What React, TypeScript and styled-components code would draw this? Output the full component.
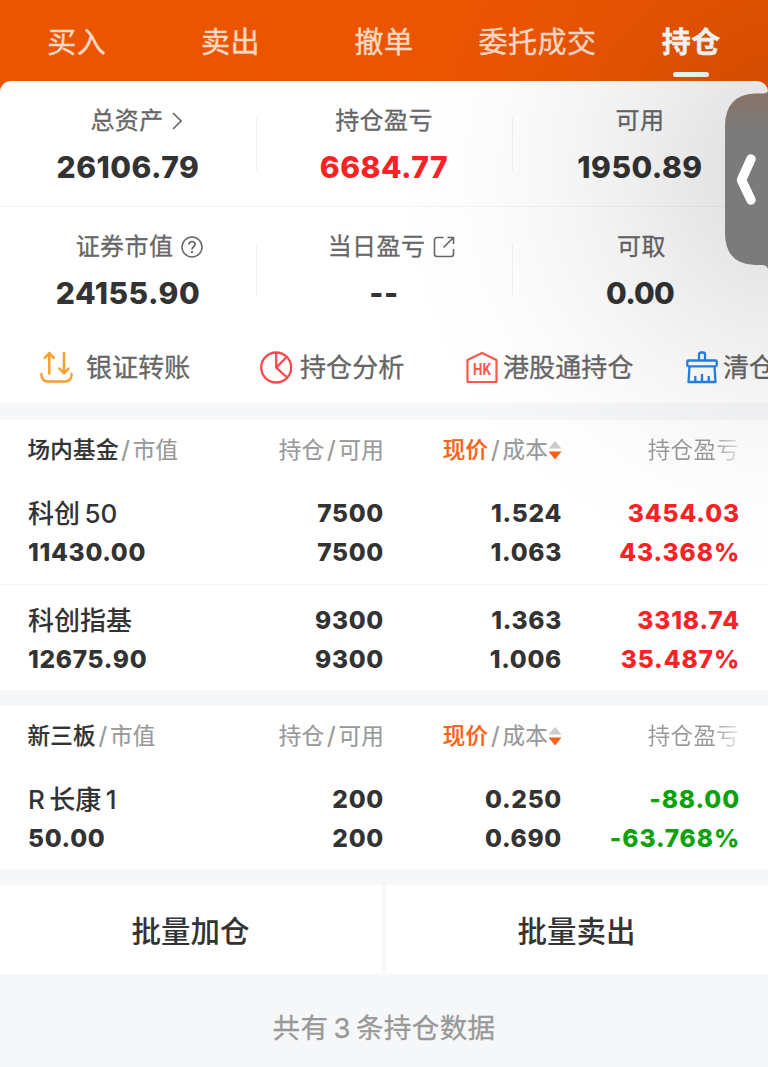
import React from 'react';
import styled, { createGlobalStyle } from 'styled-components';

const Global = createGlobalStyle`
  * { box-sizing: border-box; }
  body {
    margin: 0;
    background: #f6f7f9;
    font-family: Inter, "Noto Sans CJK SC", sans-serif;
    color: #333;
  }
`;

const Screen = styled.main`
  position: relative;
  width: 768px;
  height: 1067px;
  overflow: hidden;
  background: #f6f7f9;
`;

const Top = styled.div`
  background: #eb5502;
`;

const Tabs = styled.nav`
  display: grid;
  grid-template-columns: repeat(5, 153.6px);
  height: 81px;
`;

const Tab = styled.div<{ $active?: boolean }>`
  display: flex;
  flex-direction: column;
  align-items: center;
  padding-top: 22.5px;
  font-size: 29px;
  line-height: 40px;
  letter-spacing: 0.5px;
  white-space: nowrap;
  font-weight: ${p => (p.$active ? 700 : 400)};
  -webkit-text-stroke: 0.4px currentColor;
  color: ${p => (p.$active ? '#fff' : '#fdd9c4')};

  &::after {
    content: '';
    display: ${p => (p.$active ? 'block' : 'none')};
    width: 36px;
    height: 5px;
    margin-top: 9.5px;
    border-radius: 3px;
    background: #fff;
  }
`;

const Summary = styled.section`
  height: 322px;
  background: #fff;
  border-radius: 11px 11px 0 0;
`;

const StatRow = styled.div<{ $last?: boolean }>`
  display: grid;
  grid-template-columns: repeat(3, 256px);
  height: 126px;
  padding-top: ${p => (p.$last ? 24.5 : 25)}px;
  border-bottom: ${p => (p.$last ? 'none' : '1px solid #f3f3f3')};
`;

const Stat = styled.div`
  display: flex;
  flex-direction: column;
  align-items: center;
  gap: 13px;
  height: 80px;

  & + & {
    background: linear-gradient(#f2f2f2, #f2f2f2) left 0 top 11px / 1px 54px no-repeat;
  }
`;

const StatLabel = styled.div<{ $shift?: number }>`
  display: flex;
  align-items: center;
  height: 30px;
  padding-left: ${p => p.$shift ?? 0}px;
  font-size: 24px;
  line-height: 30px;
  letter-spacing: 0.4px;
  -webkit-text-stroke: 0.3px currentColor;
  color: #666;

  svg { margin-left: 8px; }
`;

const StatValue = styled.div<{ $color?: string; $tight?: boolean }>`
  font-size: 30px;
  font-weight: 800;
  line-height: 36px;
  letter-spacing: ${p => (p.$tight ? -0.8 : 0.5)}px;
  color: ${p => p.$color ?? '#333'};
`;

const Links = styled.div`
  display: grid;
  grid-template-columns: 220px 206px 220px 180px;
  align-items: center;
  height: 70px;
  padding-left: 40px;
`;

const QuickLink = styled.div<{ $gap: number }>`
  display: flex;
  align-items: center;
  gap: ${p => p.$gap}px;
  font-size: 26px;
  line-height: 36px;
  letter-spacing: 0.1px;
  white-space: nowrap;
  -webkit-text-stroke: 0.3px currentColor;
  color: #666;

  svg { flex: none; margin-bottom: 2px; }
`;

const Section = styled.section<{ $gap: number }>`
  margin-top: ${p => p.$gap}px;
  background: #fff;
`;

const columns = `
  display: grid;
  grid-template-columns: 190px 166px 178px 178px;
  padding-left: 28px;
`;

const Head = styled.div`
  ${columns}
  height: 59px;
  padding-top: 15px;
  font-size: 22.5px;
  line-height: 30px;
  letter-spacing: 0.3px;
  -webkit-text-stroke: 0.2px currentColor;
  color: #999;
  white-space: nowrap;
`;

const HeadCell = styled.div<{ $right?: boolean }>`
  display: flex;
  align-items: center;
  height: 30px;
  justify-content: ${p => (p.$right ? 'flex-end' : 'flex-start')};

  &:first-child { margin-left: -0.5px; }
  &:last-child { margin-right: 1px; }
`;

const Slash = styled.span`
  width: 14px;
  text-align: center;
  font-size: 24px;
`;

const Strong = styled.span<{ $color: string }>`
  color: ${p => p.$color};
  font-weight: 500;
`;

const Fading = styled.span`
  color: transparent;
  -webkit-text-stroke: 0;
  background: linear-gradient(90deg, #999 72%, #e8e8e8 100%);
  background-clip: text;
`;

const Holding = styled.div`
  ${columns}
  padding-top: 15px;
  padding-bottom: 12.5px;

  &:last-child { padding-bottom: 11.5px; }

  & + & {
    padding-top: 16px;
    border-top: 1px solid #f3f3f3;
  }
`;

const Pair = styled.div<{ $right?: boolean; $color?: string }>`
  display: flex;
  flex-direction: column;
  text-align: ${p => (p.$right ? 'right' : 'left')};
  font-size: 24.5px;
  font-weight: 800;
  line-height: 38.75px;
  letter-spacing: ${p => (p.$color ? 0.9 : 0.7)}px;
  white-space: nowrap;
  color: ${p => p.$color ?? '#333'};
`;

const Name = styled.span`
  padding-top: 1px;
  margin-bottom: -1px;
  font-size: 26px;
  font-weight: 500;
  letter-spacing: 0;
  word-spacing: -2.5px;
`;

const Actions = styled.div`
  display: grid;
  grid-template-columns: 382px 382px;
  gap: 4px;
  height: 89px;
  margin-top: 16px;
`;

const Action = styled.div`
  display: flex;
  align-items: center;
  justify-content: center;
  padding: 0 1px 1px 0;
  background: #fff;
  font-size: 29.5px;
  font-weight: 500;
`;

const Footer = styled.footer`
  padding-top: 34px;
  text-align: center;
  font-size: 27.5px;
  line-height: 40px;
  letter-spacing: 0.4px;
  word-spacing: -3px;
  -webkit-text-stroke: 0.3px currentColor;
  color: #999;
`;

const Shade = styled.div`
  position: absolute;
  inset: 0;
  pointer-events: none;
  background: radial-gradient(
    circle 410px at 800px 175px,
    rgba(0, 0, 0, 0.12) 0%,
    rgba(0, 0, 0, 0.11) 18%,
    rgba(0, 0, 0, 0.07) 38%,
    rgba(0, 0, 0, 0.035) 58%,
    rgba(0, 0, 0, 0.012) 78%,
    transparent 100%
  );
`;

const Handle = styled.div`
  position: absolute;
  top: 90px;
  right: 0;
  width: 43px;
  height: 180px;

  svg { display: block; }
`;

const Chevron = () => (
  <svg width="10" height="18" viewBox="0 0 10 18" fill="none" stroke="#666" strokeWidth="1.6">
    <path d="M1 1l8 8-8 8" />
  </svg>
);

const Help = () => (
  <svg width="22" height="22" viewBox="0 0 22 22" fill="none" stroke="#666" strokeWidth="1.5">
    <circle cx="11" cy="11" r="10" />
    <path d="M7.900 8.600c0-1.900 1.300-3.100 3.100-3.100s3.100 1.100 3.100 2.800c0 2.400-3.100 2.500-3.100 5.100" strokeWidth="1.7" />
    <path d="M11 15v2" strokeWidth="1.9" />
  </svg>
);

const Share = () => (
  <svg width="22" height="22" viewBox="0 0 22 22" fill="none" stroke="#666" strokeWidth="1.6">
    <path d="M10.500 1.500H4a2.500 2.500 0 0 0-2.500 2.500v14A2.500 2.500 0 0 0 4 20.500h14a2.500 2.500 0 0 0 2.500-2.500v-5" />
    <path d="M14.500 1.500h6v6.500M20.500 1.500L10.500 11.500" />
  </svg>
);

const TransferIcon = () => (
  <svg width="33" height="33" viewBox="0 0 33 33" fill="none" stroke="#f5a030" strokeWidth="2.500" strokeLinecap="round" strokeLinejoin="round">
    <path d="M9.300 22.500V2M4.800 6.800L9.300 2l4.500 4.800" />
    <path d="M24 2v20M19.300 17.500L24 22.300l4.500-4.800" />
    <path d="M1.500 23v1.500a6 6 0 0 0 6 6h18a6 6 0 0 0 6-6V23" />
  </svg>
);

const PieIcon = () => (
  <svg width="33" height="33" viewBox="0 0 33 33" fill="none" stroke="#fa4a50" strokeWidth="2.300">
    <circle cx="16.200" cy="16.500" r="15" />
    <path d="M16.200 1.500v15.200l11 9.800M16.200 16.700L26.500 6" />
  </svg>
);

const HkIcon = () => (
  <svg width="32" height="33" viewBox="0 0 32 33">
    <path d="M1.500 31V9L16 2l14.500 7v22z" fill="none" stroke="#fb5a4c" strokeWidth="2.200" strokeLinejoin="round" />
    <text x="7" y="23.800" fontFamily="Roboto, sans-serif" fontSize="16.500" fontWeight="700" fill="#fb5a4c" textLength="18" lengthAdjust="spacingAndGlyphs">
      HK
    </text>
  </svg>
);

const BrushIcon = () => (
  <svg width="32" height="33" viewBox="0 0 32 33" fill="none" stroke="#2482ea" strokeWidth="2.300" strokeLinejoin="round">
    <path d="M13 9.500V3.500a2 2 0 0 1 2-2h2a2 2 0 0 1 2 2v6" />
    <rect x="1.300" y="9.500" width="29.400" height="5.800" rx="1" />
    <path d="M3.500 15.300L2.500 31h27l-1-15.700M9.300 31v-6M16 31v-8M22.700 31v-6" />
  </svg>
);

const SortIcon = () => (
  <svg width="14" height="20" viewBox="0 0 14 20">
    <path d="M7 1l6.500 7.500H.5z" fill="#ccc" />
    <path d="M7 19.500L.5 11.500h13z" fill="#fb6112" />
  </svg>
);

interface Item {
  name: string;
  value: string;
  held: string;
  free: string;
  price: string;
  cost: string;
  profit: string;
  rate: string;
}

const RED = '#fb2226';
const GREEN = '#0ba30b';

const funds: Item[] = [
  { name: '科创 50', value: '11430.00', held: '7500', free: '7500', price: '1.524', cost: '1.063', profit: '3454.03', rate: '43.368%' },
  { name: '科创指基', value: '12675.90', held: '9300', free: '9300', price: '1.363', cost: '1.006', profit: '3318.74', rate: '35.487%' },
];

const otc: Item[] = [
  { name: 'R 长康 1', value: '50.00', held: '200', free: '200', price: '0.250', cost: '0.690', profit: '-88.00', rate: '-63.768%' },
];

const HoldingTable = ({ title, items, gap }: { title: string; items: Item[]; gap: number }) => (
  <Section $gap={gap}>
    <Head>
      <HeadCell>
        <Strong $color="#333">{title}</Strong>
        <Slash>/</Slash>市值
      </HeadCell>
      <HeadCell $right>持仓<Slash>/</Slash>可用</HeadCell>
      <HeadCell $right>
        <Strong $color="#fb6112">现价</Strong>
        <Slash>/</Slash>成本<SortIcon />
      </HeadCell>
      <HeadCell $right><Fading>持仓盈亏</Fading></HeadCell>
    </Head>
    {items.map(item => {
      const color = item.profit.startsWith('-') ? GREEN : RED;
      return (
        <Holding key={item.name}>
          <Pair><Name>{item.name}</Name><span>{item.value}</span></Pair>
          <Pair $right><span>{item.held}</span><span>{item.free}</span></Pair>
          <Pair $right><span>{item.price}</span><span>{item.cost}</span></Pair>
          <Pair $right $color={color}><span>{item.profit}</span><span>{item.rate}</span></Pair>
        </Holding>
      );
    })}
  </Section>
);

export default function App() {
  return (
    <Screen>
      <Global />
      <Top>
        <Tabs>
          <Tab>买入</Tab>
          <Tab>卖出</Tab>
          <Tab>撤单</Tab>
          <Tab>委托成交</Tab>
          <Tab $active>持仓</Tab>
        </Tabs>
        <Summary>
          <StatRow>
            <Stat><StatLabel $shift={16}>总资产<Chevron /></StatLabel><StatValue>26106.79</StatValue></Stat>
            <Stat><StatLabel>持仓盈亏</StatLabel><StatValue $color={RED}>6684.77</StatValue></Stat>
            <Stat><StatLabel>可用</StatLabel><StatValue>1950.89</StatValue></Stat>
          </StatRow>
          <StatRow $last>
            <Stat><StatLabel $shift={23}>证券市值<Help /></StatLabel><StatValue>24155.90</StatValue></Stat>
            <Stat><StatLabel $shift={15}>当日盈亏<Share /></StatLabel><StatValue>--</StatValue></Stat>
            <Stat><StatLabel $shift={3}>可取</StatLabel><StatValue $tight>0.00</StatValue></Stat>
          </StatRow>
          <Links>
            <QuickLink $gap={13}><TransferIcon />银证转账</QuickLink>
            <QuickLink $gap={7}><PieIcon />持仓分析</QuickLink>
            <QuickLink $gap={5}><HkIcon />港股通持仓</QuickLink>
            <QuickLink $gap={5}><BrushIcon />清仓</QuickLink>
          </Links>
        </Summary>
      </Top>
      <HoldingTable title="场内基金" items={funds} gap={17} />
      <HoldingTable title="新三板" items={otc} gap={16} />
      <Actions>
        <Action>批量加仓</Action>
        <Action>批量卖出</Action>
      </Actions>
      <Footer>共有 3 条持仓数据</Footer>
      <Shade />
      <Handle>
        <svg width="43" height="180" viewBox="0 0 43 180">
          <defs>
            <linearGradient id="handle" x1="0" y1="0" x2="0" y2="1">
              <stop offset="0" stopColor="#8a7264" />
              <stop offset="0.22" stopColor="#7b7b7b" />
            </linearGradient>
          </defs>
          <path d="M43 1Q42 3.500 38 3.500H30Q0 5 0 36V143Q0 174 30 175H38Q42 175.500 43 179z" fill="url(#handle)" />
          <path d="M26 69L16.500 90L26 110" fill="none" stroke="#fff" strokeWidth="9.500" strokeLinecap="round" strokeLinejoin="round" />
        </svg>
      </Handle>
    </Screen>
  );
}
